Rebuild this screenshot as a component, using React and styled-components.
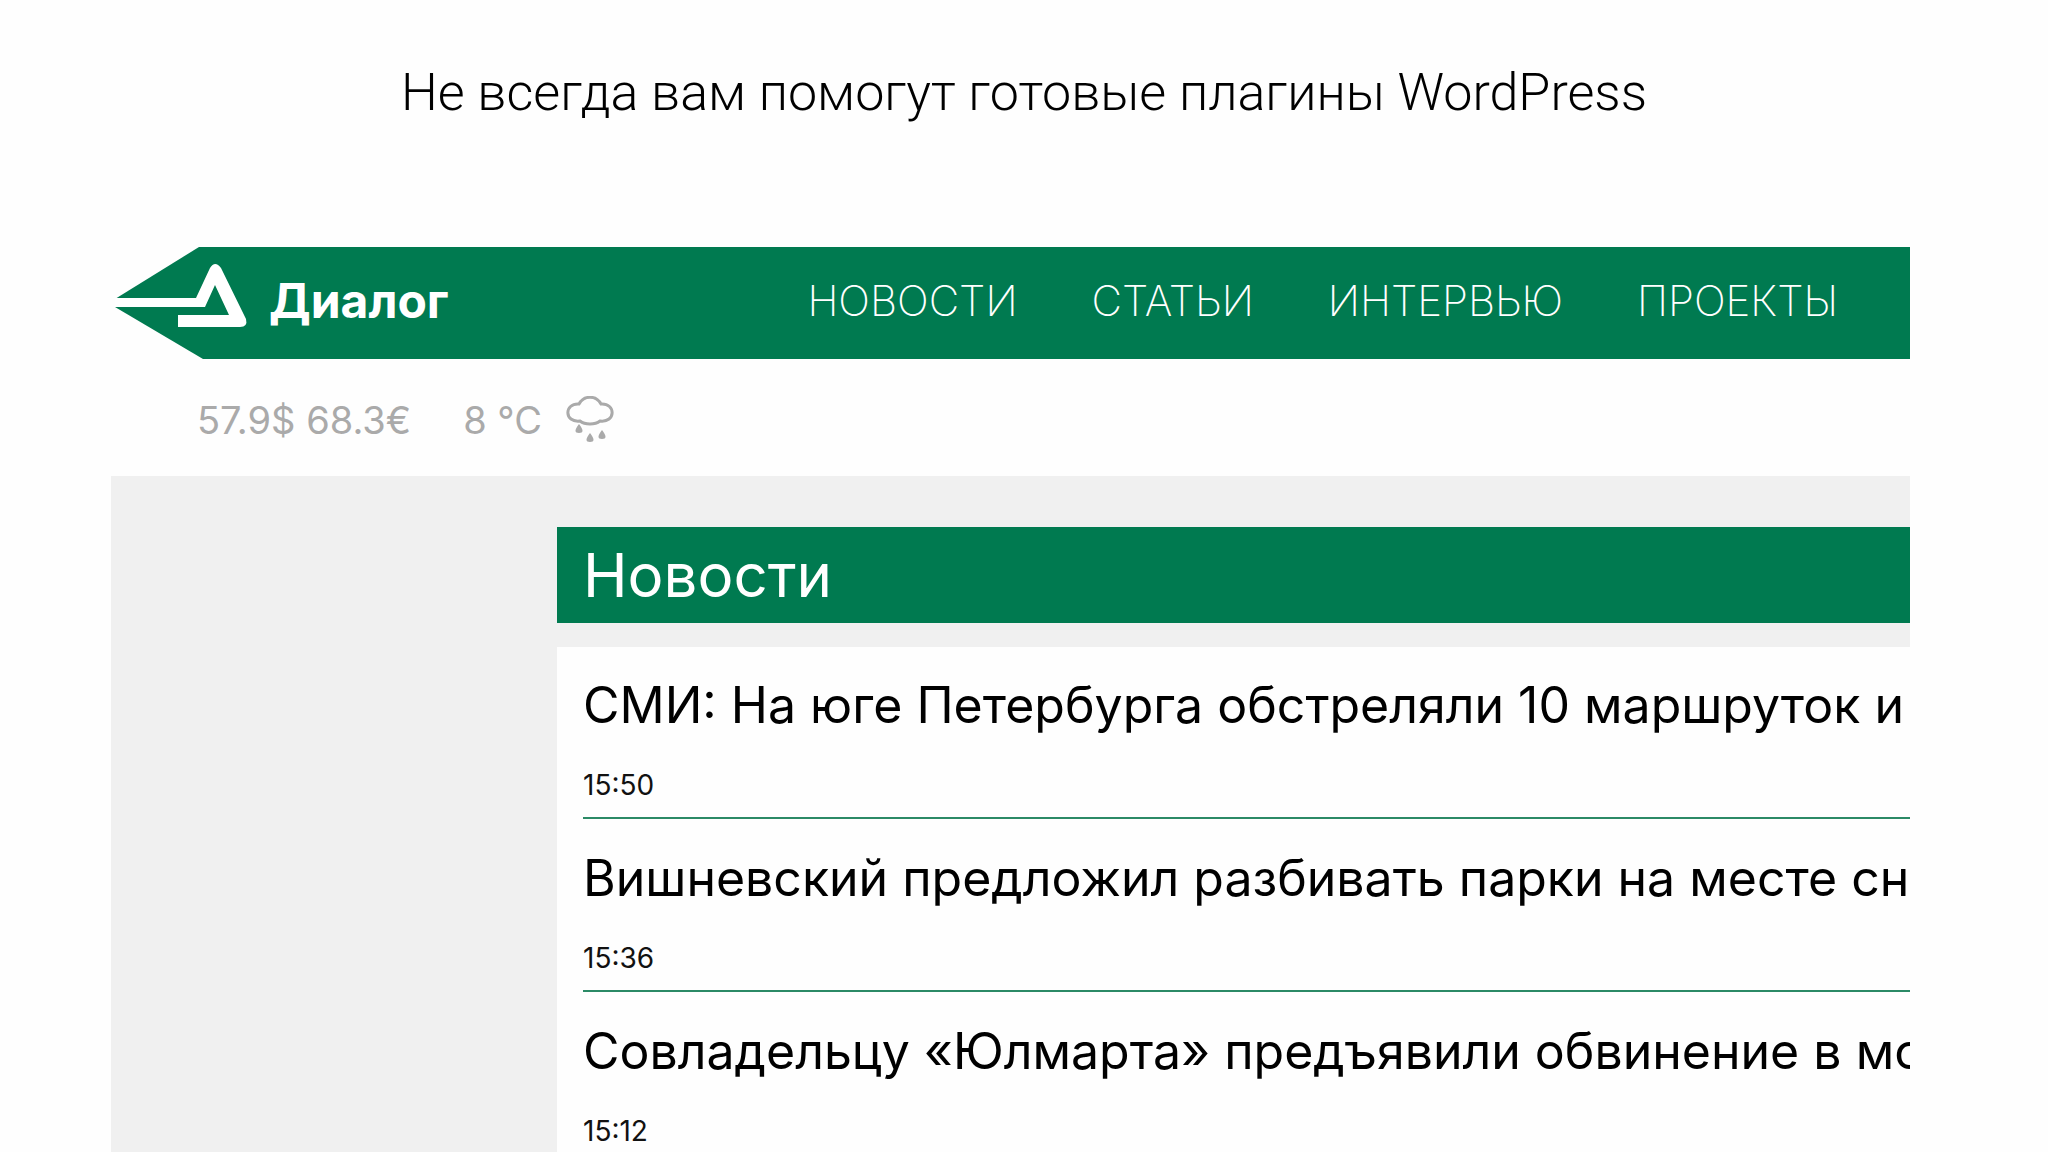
import React from 'react';
import styled, { createGlobalStyle } from 'styled-components';

const GlobalStyle = createGlobalStyle`
  * {
    box-sizing: border-box;
  }

  body {
    margin: 0;
    background-color: #fefefe;
    font-family: Inter, 'Open Sans', sans-serif;
  }
`;

const Slide = styled.div`
  display: flex;
  flex-direction: column;
  height: 100vh;
  padding: 0 138px 0 111px;
  overflow: hidden;
`;

const SlideTitle = styled.h1`
  margin: 0;
  padding: 61px 0 122px;
  margin-right: -27px;
  color: #000;
  font-family: Roboto, sans-serif;
  font-size: 52px;
  font-weight: 300;
  line-height: 64px;
  text-align: center;
  white-space: nowrap;
`;

const Site = styled.div`
  display: flex;
  flex: 1;
  flex-direction: column;
  overflow: hidden;
`;

const Header = styled.header`
  display: flex;
  flex-shrink: 0;
  align-items: center;
  height: 112px;
  padding-left: 4px;
`;

const HeaderBar = styled.div`
  display: flex;
  flex: 1;
  align-items: center;
  justify-content: space-between;
  height: 100%;
  padding: 0 72px 4px 2px;
  background-color: #007a50;
`;

const Logo = styled.a`
  display: flex;
  align-items: center;
  color: #fff;
  font-size: 48px;
  font-weight: 700;
  line-height: 60px;
  text-decoration: none;
`;

const LogoMark = styled.svg`
  display: block;
  flex-shrink: 0;
`;

const Nav = styled.nav`
  display: flex;
  gap: 74px;
`;

const NavLink = styled.a`
  color: #fff;
  font-size: 42px;
  font-weight: 200;
  line-height: 56px;
  text-decoration: none;
  text-transform: uppercase;
`;

const InfoBar = styled.div`
  display: flex;
  flex-shrink: 0;
  align-items: center;
  height: 117px;
  padding: 4px 0 0 86px;
  color: #aaa;
  font-size: 38px;
  line-height: 48px;
`;

const Weather = styled.div`
  display: flex;
  align-items: center;
  gap: 24px;
  margin-left: 52px;
`;

const Page = styled.div`
  flex: 1;
  padding: 51px 0 0 446px;
  background-color: #f0f0f0;
`;

const SectionTitle = styled.h2`
  margin: 0 0 24px;
  padding: 16px 26px;
  background-color: #007a50;
  color: #fff;
  font-size: 60px;
  font-weight: 400;
  line-height: 64px;
`;

const NewsList = styled.ul`
  margin: 0;
  padding: 0 0 0 26px;
  background-color: #fefefe;
  list-style: none;
`;

const NewsItem = styled.li`
  padding: 26px 0 14px;
  border-bottom: 2px solid #2b8a66;

  & + & {
    padding-top: 27px;
  }
`;

const NewsTitle = styled.h3`
  margin: 0 0 30px;
  color: #000;
  font-size: 50px;
  font-weight: 400;
  line-height: 64px;
  white-space: nowrap;
`;

const NewsTime = styled.time`
  display: block;
  color: #111;
  font-size: 28px;
  line-height: 36px;
`;

const links = ['Новости', 'Статьи', 'Интервью', 'Проекты'];

const news = [
  { time: '15:50', title: 'СМИ: На юге Петербурга обстреляли 10 маршруток и' },
  { time: '15:36', title: 'Вишневский предложил разбивать парки на месте сне' },
  { time: '15:12', title: 'Совладельцу «Юлмарта» предъявили обвинение в мош' },
];

const App = () => {
  return (
    <Slide>
      <GlobalStyle />
      <SlideTitle>Не всегда вам помогут готовые плагины WordPress</SlideTitle>
      <Site>
        <Header>
          <LogoMark width="152" height="112" viewBox="0 0 152 112" aria-hidden="true">
            <path d="M0 52 L84 0 H152 V112 H88 L0 60 Z" fill="#007a50" />
            <path
              d="M0 51 H81 L95 21 Q100 13 106 21 L131 72 Q133 80 125 80 H63 V68 H114 L100 38 L90 60 H0 Z"
              fill="#fff"
            />
          </LogoMark>
          <HeaderBar>
            <Logo href="#">Диалог</Logo>
            <Nav>
              {links.map(link => (
                <NavLink key={link} href="#">{link}</NavLink>
              ))}
            </Nav>
          </HeaderBar>
        </Header>
        <InfoBar>
          <span>57.9$ 68.3€</span>
          <Weather>
            <span>8 °C</span>
            <svg width="48" height="48" viewBox="0 0 48 48" aria-hidden="true">
              <path
                d="M13 8 C18 -1 30 -1 35 8 C50 7 50 27 34 25 C29 29 19 29 14 25 C-2 27 -2 7 13 8 Z"
                fill="none"
                stroke="#aaa"
                strokeWidth="3"
              />
              <path
                d="M13 28 q7 9 0 9 q-7 0 0 -9 Z M24 37 q7 9 0 9 q-7 0 0 -9 Z M36 34 q7 9 0 9 q-7 0 0 -9 Z"
                fill="#aaa"
              />
            </svg>
          </Weather>
        </InfoBar>
        <Page>
          <SectionTitle>Новости</SectionTitle>
          <NewsList>
            {news.map(item => (
              <NewsItem key={item.time}>
                <NewsTitle>{item.title}</NewsTitle>
                <NewsTime>{item.time}</NewsTime>
              </NewsItem>
            ))}
          </NewsList>
        </Page>
      </Site>
    </Slide>
  );
};

export default App;
